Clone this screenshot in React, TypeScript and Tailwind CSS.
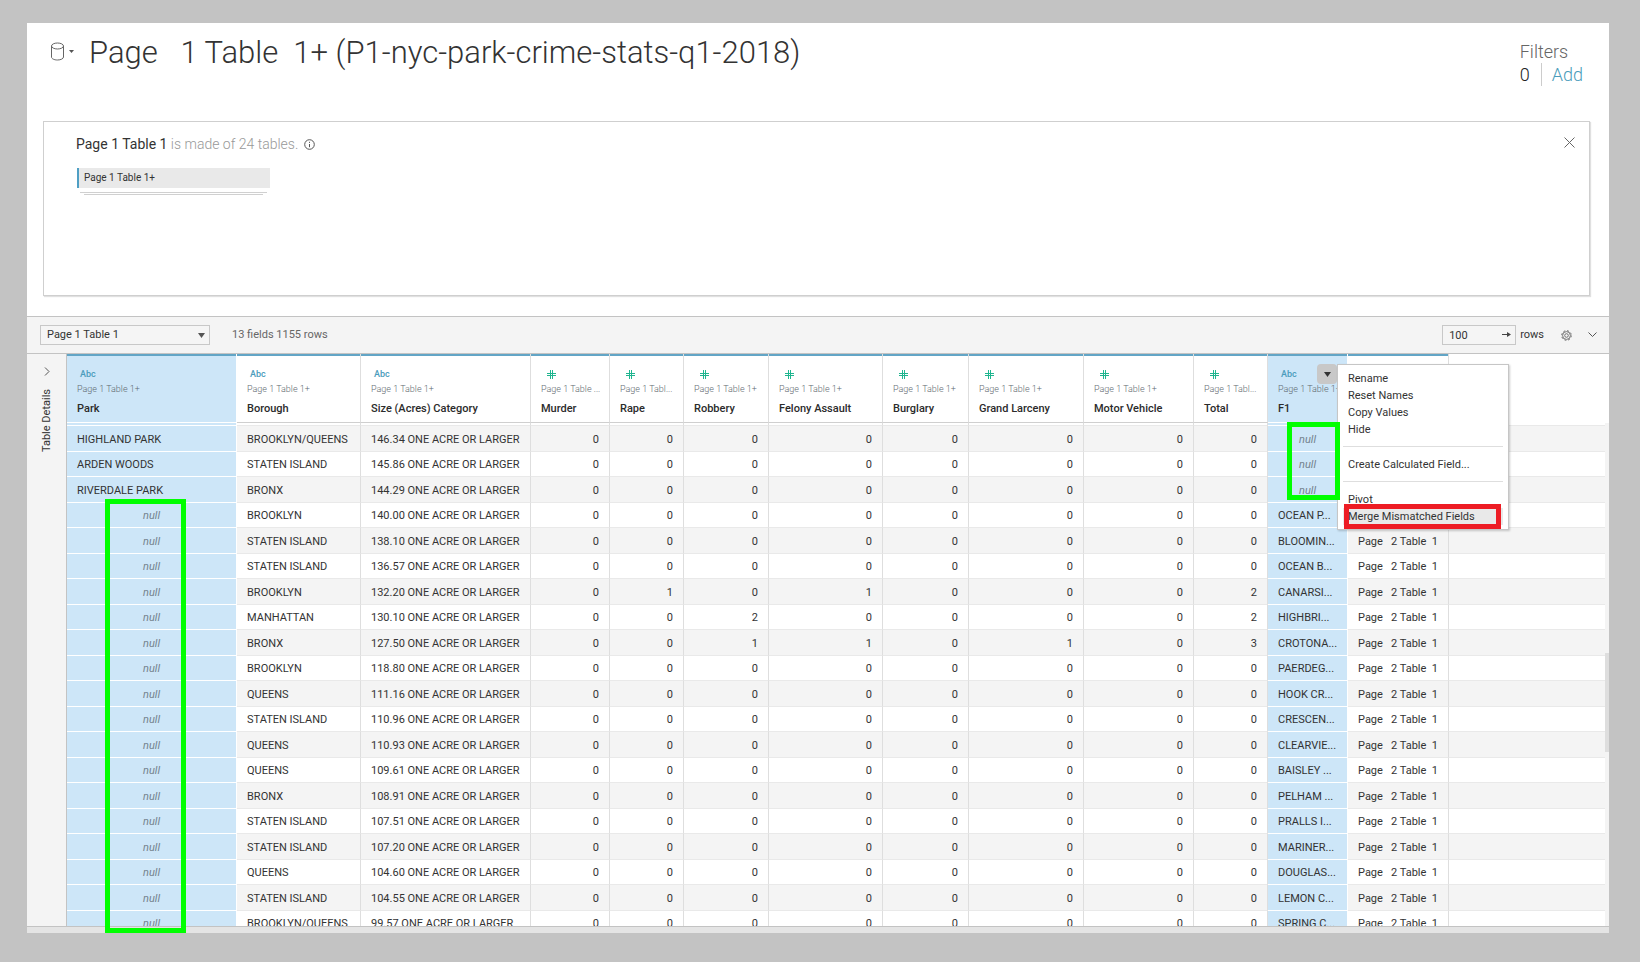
import React from "react";

type Column = { name: string; source: string; kind: "text" | "number"; width: string; selected?: boolean };

const columns: Column[] = [
  { name: "Park", source: "Page 1 Table 1+", kind: "text", width: "w-[170px]", selected: true },
  { name: "Borough", source: "Page 1 Table 1+", kind: "text", width: "w-[124px]" },
  { name: "Size (Acres) Category", source: "Page 1 Table 1+", kind: "text", width: "w-[170px]" },
  { name: "Murder", source: "Page 1 Table ...", kind: "number", width: "w-[79px]" },
  { name: "Rape", source: "Page 1 Tabl...", kind: "number", width: "w-[74px]" },
  { name: "Robbery", source: "Page 1 Table 1+", kind: "number", width: "w-[85px]" },
  { name: "Felony Assault", source: "Page 1 Table 1+", kind: "number", width: "w-[114px]" },
  { name: "Burglary", source: "Page 1 Table 1+", kind: "number", width: "w-[86px]" },
  { name: "Grand Larceny", source: "Page 1 Table 1+", kind: "number", width: "w-[115px]" },
  { name: "Motor Vehicle", source: "Page 1 Table 1+", kind: "number", width: "w-[110px]" },
  { name: "Total", source: "Page 1 Tabl...", kind: "number", width: "w-[74px]" },
  { name: "F1", source: "Page 1 Table 1+", kind: "text", width: "w-[80px]", selected: true },
  { name: "", source: "", kind: "text", width: "w-[101px]" },
];

type Row = [string | null, string, string, number[], string | null];
const none = [0, 0, 0, 0, 0, 0, 0, 0];

const rows: Row[] = [
  ["HIGHLAND PARK", "BROOKLYN/QUEENS", "146.34", none, null],
  ["ARDEN WOODS", "STATEN ISLAND", "145.86", none, null],
  ["RIVERDALE PARK", "BRONX", "144.29", none, null],
  [null, "BROOKLYN", "140.00", none, "OCEAN P..."],
  [null, "STATEN ISLAND", "138.10", none, "BLOOMIN..."],
  [null, "STATEN ISLAND", "136.57", none, "OCEAN B..."],
  [null, "BROOKLYN", "132.20", [0, 1, 0, 1, 0, 0, 0, 2], "CANARSI..."],
  [null, "MANHATTAN", "130.10", [0, 0, 2, 0, 0, 0, 0, 2], "HIGHBRI..."],
  [null, "BRONX", "127.50", [0, 0, 1, 1, 0, 1, 0, 3], "CROTONA..."],
  [null, "BROOKLYN", "118.80", none, "PAERDEG..."],
  [null, "QUEENS", "111.16", none, "HOOK CR..."],
  [null, "STATEN ISLAND", "110.96", none, "CRESCEN..."],
  [null, "QUEENS", "110.93", none, "CLEARVIE..."],
  [null, "QUEENS", "109.61", none, "BAISLEY ..."],
  [null, "BRONX", "108.91", none, "PELHAM ..."],
  [null, "STATEN ISLAND", "107.51", none, "PRALLS I..."],
  [null, "STATEN ISLAND", "107.20", none, "MARINER..."],
  [null, "QUEENS", "104.60", none, "DOUGLAS..."],
  [null, "STATEN ISLAND", "104.55", none, "LEMON C..."],
  [null, "BROOKLYN/QUEENS", "99.57", none, "SPRING C..."],
];

function HashIcon() {
  return (
    <svg width="9" height="9" viewBox="0 0 9 9" className="ml-[3px] block" aria-hidden="true">
      <path d="M3.5 0v9M5.5 0v9M0 3.5h9M0 5.5h9" stroke="#1fb58f" strokeWidth="1" fill="none" />
    </svg>
  );
}

function HeaderCell({ column }: { column: Column }) {
  const selected = column.selected;
  return (
    <th
      scope="col"
      className={
        "relative h-[69px] border-r border-b p-0 text-left align-top font-normal " +
        (selected ? "border-white bg-[#cde6f8]" : "border-r-[#dedede] border-b-[#cfcfcf] bg-white")
      }
    >
      <div className="h-[68px] overflow-hidden border-t-2 border-[#62a5c6] pt-3 pl-[10px] whitespace-nowrap">
        <div className="flex h-3 items-center pl-[3px] text-[9px] leading-3 font-medium text-[#4a9cbb]">
          {column.name && (column.kind === "number" ? <HashIcon /> : "Abc")}
        </div>
        <div className="mt-px text-[9px] leading-4 font-light text-[#5f6a72]">{column.source}</div>
        <div className="mt-1 text-[11px] leading-4 font-medium text-[#2b2b2b]">{column.name}</div>
      </div>
      {column.name === "F1" && (
        <button
          type="button"
          aria-label="Field options"
          className="absolute top-[10px] right-[10px] flex h-5 w-5 items-center justify-center rounded-sm bg-[#c8c8c8]"
        >
          <svg width="7" height="5" viewBox="0 0 7 5" aria-hidden="true">
            <path d="M0 0h7L3.5 5z" fill="#333" />
          </svg>
        </button>
      )}
    </th>
  );
}

function DataRow({ row, index }: { row: Row; index: number }) {
  const odd = index % 2 === 0;
  const [park, borough, size, counts, f1] = row;
  const rowClass = odd ? "h-[26px] bg-[#f4f4f4]" : "h-[25px] bg-white";
  const base = "overflow-hidden border-r border-b pt-0.5 pb-0 leading-4 whitespace-pre ";
  const cell = base + "border-r-[#dedede] border-b-[#e9e9e9] px-[10px]";
  const picked = base + "border-white bg-[#cde6f8] pr-0 pl-[10px]";
  const empty = base + "border-white bg-[#cde6f8] px-0 text-center text-[#74838d] italic";
  return (
    <tr className={rowClass}>
      <td className={park ? picked : empty}>{park ?? "null"}</td>
      <td className={cell}>{borough}</td>
      <td className={cell}>{size} ONE ACRE OR LARGER</td>
      {counts.map((n, i) => (
        <td key={i} className={cell + " text-right"}>
          {n}
        </td>
      ))}
      <td className={f1 ? picked : empty}>{f1 ?? "null"}</td>
      <td className={cell}>{"Page   2 Table  1"}</td>
      <td className="border-b border-[#e9e9e9] p-0" />
    </tr>
  );
}

function FieldMenu() {
  const item = "block h-[17px] w-full pl-[5px] text-left leading-[17px]";
  return (
    <div
      role="menu"
      className="absolute top-[10px] left-[1310px] z-10 w-[172px] border border-[#c6c6c6] bg-white px-[5px] pt-[5px] pb-1 text-[11px] text-[#333] shadow-[1px_1px_2px_rgba(0,0,0,0.2)]"
    >
      <button type="button" role="menuitem" className={item}>Rename</button>
      <button type="button" role="menuitem" className={item}>Reset Names</button>
      <button type="button" role="menuitem" className={item}>Copy Values</button>
      <button type="button" role="menuitem" className={item}>Hide</button>
      <hr className="mt-2 mb-[9px] border-[#dedede]" />
      <button type="button" role="menuitem" className={item}>Create Calculated Field...</button>
      <hr className="mt-2 mb-[9px] border-[#dedede]" />
      <button type="button" role="menuitem" className={item}>Pivot</button>
      <button type="button" role="menuitem" className={item + " bg-[#e9e9e9]"}>Merge Mismatched Fields</button>
      <div className="pointer-events-none absolute right-[7px] bottom-0 left-[6px] h-[25px] border-[5px] border-[#ed1c24]" />
    </div>
  );
}

export default function App() {
  return (
    <div className="h-screen bg-[#c3c3c3] pt-[23px] pr-[31px] pb-[29px] pl-[27px] font-['Roboto',sans-serif] text-[11px] text-[#333]">
      <main className="relative flex h-full flex-col bg-white">
        <header className="flex h-[98px] shrink-0 items-start justify-between pr-[26px] pl-[23px]">
          <div className="flex items-start pt-[10px]">
            <button type="button" aria-label="Data source" className="flex h-9 items-center gap-1">
              <svg width="15" height="19" viewBox="0 0 15 19" fill="none" stroke="#666" aria-hidden="true">
                <ellipse cx="7.5" cy="4" rx="6" ry="3" />
                <path d="M1.500 4v11c0 1.700 2.700 3 6 3s6-1.300 6-3V4" />
              </svg>
              <svg width="5" height="3" viewBox="0 0 5 3" aria-hidden="true">
                <path d="M0 0h5L2.500 3z" fill="#555" />
              </svg>
            </button>
            <h1 className="pl-[15px] text-[31px] leading-10 font-light whitespace-pre text-[#333]">
              {"Page   1 Table  1+ (P1-nyc-park-crime-stats-q1-2018)"}
            </h1>
          </div>
          <div className="pt-[17px] text-[18px] leading-[23px] font-light">
            <div className="text-[#666]">Filters</div>
            <div className="flex items-center">
              <span className="w-[21px] text-[#222]">0</span>
              <a href="#add" className="border-l border-[#ccc] pl-[10px] text-[#4a9cbb]">Add</a>
            </div>
          </div>
        </header>

        <section className="relative mr-[19px] ml-4 h-[175px] shrink-0 border border-[#cfcfcf] pt-3 pl-8 shadow-[1px_1px_1px_rgba(0,0,0,0.12)]">
          <div className="flex h-5 items-center gap-[6px] text-[14px] leading-5">
            <p className="font-light text-[#999]">
              <span className="font-normal text-[#333]">Page 1 Table 1</span> is made of 24 tables.
            </p>
            <svg width="11" height="11" viewBox="0 0 11 11" fill="none" stroke="#555" aria-hidden="true">
              <circle cx="5.5" cy="5.5" r="4.800" />
              <path d="M5.500 5v3.200M5.500 2.800v1.100" />
            </svg>
          </div>
          <div className="mt-[14px] ml-px">
            <div className="h-5 w-[193px] border-l-2 border-[#4f9fc4] bg-[#e9e9e9] pl-[5px] text-[10px] leading-5 text-[#333]">
              Page 1 Table 1+
            </div>
            <div className="mt-1 ml-[3px] h-px w-[187px] bg-[#d0d0d0]" />
            <div className="mt-px ml-[7px] h-px w-[179px] bg-[#d0d0d0]" />
          </div>
          <button type="button" aria-label="Close" className="absolute top-[14px] right-[14px] flex h-3 w-3 items-center justify-center">
            <svg width="11" height="11" viewBox="0 0 11 11" stroke="#666" aria-hidden="true">
              <path d="M.5.5l10 10M10.500.5l-10 10" />
            </svg>
          </button>
        </section>

        <div className="mt-5 flex h-[38px] shrink-0 items-center border-y border-[#c3c3c3] bg-[#f4f4f4] pr-3 pl-[13px]">
          <div className="relative">
            <select
              aria-label="Table"
              className="h-5 w-[170px] appearance-none border border-[#c8c8c8] bg-[#f5f5f5] pl-[6px] text-[11px] text-[#333]"
            >
              <option>Page 1 Table 1</option>
            </select>
            <svg width="7" height="5" viewBox="0 0 7 5" className="pointer-events-none absolute top-2 right-[5px]" aria-hidden="true">
              <path d="M0 0h7L3.500 5z" fill="#555" />
            </svg>
          </div>
          <span className="ml-[22px] text-[#666]">13 fields 1155 rows</span>
          <div className="ml-auto flex items-center">
            <div className="relative">
              <input
                id="row-count"
                defaultValue="100"
                className="h-5 w-[74px] border border-[#c8c8c8] bg-[#f5f5f5] pl-[6px] text-[11px] text-[#333]"
              />
              <svg width="9" height="7" viewBox="0 0 9 7" className="pointer-events-none absolute top-[6px] right-[5px]" aria-hidden="true">
                <path d="M0 3.500h6" stroke="#444" />
                <path d="M5 1l4 2.500L5 6z" fill="#444" />
              </svg>
            </div>
            <label htmlFor="row-count" className="ml-1">rows</label>
            <button type="button" aria-label="Settings" className="ml-[17px]">
              <svg width="11" height="11" viewBox="0 0 11 11" fill="none" stroke="#666" aria-hidden="true">
                <circle cx="5.500" cy="5.500" r="4.800" strokeDasharray="1.900 1.870" />
                <circle cx="5.500" cy="5.500" r="3.900" strokeWidth=".9" />
                <circle cx="5.500" cy="5.500" r="1.800" strokeWidth=".9" />
              </svg>
            </button>
            <button type="button" aria-label="Collapse" className="ml-4">
              <svg width="9" height="6" viewBox="0 0 9 6" fill="none" stroke="#555" aria-hidden="true">
                <path d="M.5.5l4 4 4-4" />
              </svg>
            </button>
          </div>
        </div>

        <div className="relative flex min-h-0 flex-1">
          <button type="button" className="flex w-10 shrink-0 flex-col items-center border-r border-[#c3c3c3] bg-[#f4f4f4] pt-[13px]">
            <svg width="6" height="9" viewBox="0 0 6 9" fill="none" stroke="#555" aria-hidden="true">
              <path d="M1 .5l4 4-4 4" />
            </svg>
            <span className="mt-[13px] rotate-180 text-[11px] leading-4 [writing-mode:vertical-rl]">Table Details</span>
          </button>
          <div className="min-w-0 flex-1 overflow-hidden">
            <table className="w-full table-fixed border-separate border-spacing-0">
              <colgroup>
                {columns.map((c, i) => (
                  <col key={i} className={c.width} />
                ))}
                <col />
              </colgroup>
              <thead>
                <tr>
                  {columns.map((c, i) => (
                    <HeaderCell key={i} column={c} />
                  ))}
                  <td className="p-0" />
                </tr>
                <tr className="h-[3px]">
                  {columns.map((c, i) => (
                    <td
                      key={i}
                      className={
                        c.selected
                          ? "border-r border-b border-white bg-[#cde6f8] p-0"
                          : "border-r border-b border-r-[#dedede] border-b-[#e9e9e9] p-0"
                      }
                    />
                  ))}
                  <td className="border-b border-[#e9e9e9] p-0" />
                </tr>
              </thead>
              <tbody>
                {rows.map((r, i) => (
                  <DataRow key={i} row={r} index={i} />
                ))}
              </tbody>
            </table>
          </div>
          <div className="flex w-1 shrink-0 flex-col pt-[69px]">
            <div className="flex-1 bg-[#f4f4f4] pt-[230px]">
              <div className="h-[99px] bg-[#dedede]" />
            </div>
          </div>
          <FieldMenu />
        </div>
        <div className="h-[7px] shrink-0 border-t border-[#c3c3c3] bg-[#e4e4e4]" />

        <div className="pointer-events-none absolute top-[476px] bottom-0 left-[78px] w-[81px] border-[5px] border-[#00ff00]" />
        <div className="pointer-events-none absolute top-[399px] left-[1260px] z-20 h-[78px] w-[53px] border-[5px] border-[#00ff00]" />
      </main>
    </div>
  );
}
